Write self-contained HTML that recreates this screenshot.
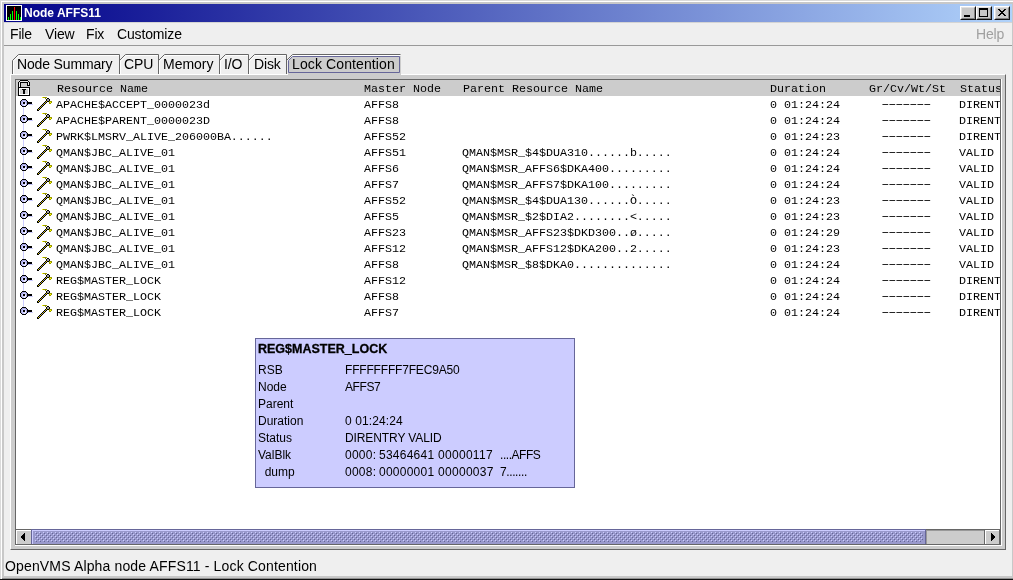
<!DOCTYPE html>
<html>
<head>
<meta charset="utf-8">
<title>Node AFFS11</title>
<style>
html,body{margin:0;padding:0;}
body{width:1013px;height:580px;overflow:hidden;background:#c8c8c8;position:relative;font-family:"Liberation Sans",Arial,sans-serif;color:#000;}
.abs{position:absolute;}
#frame{left:0;top:0;width:1013px;height:580px;background:#c8c8c8;}
#f1{left:0;top:0;width:1013px;height:1px;background:#dadada;}
#f2{left:0;top:0;width:1px;height:580px;background:#dadada;}
#f3{left:1px;top:1px;width:1012px;height:1px;background:#fff;}
#f4{left:1px;top:1px;width:1px;height:578px;background:#fff;}
#f5{left:0;top:579px;width:1013px;height:1px;background:#101010;}
#f6{left:2px;top:578px;width:1011px;height:1px;background:#909090;}
#title{left:4px;top:4px;width:1008px;height:18px;background:linear-gradient(to right,#02028a 0%,#b0d2fa 100%);}
#ttext{left:24.3px;top:4px;height:18px;line-height:18px;font-size:12px;font-weight:bold;color:#fff;white-space:nowrap;}
#client{left:4px;top:23px;width:1008px;height:553px;background:#efefef;}
#redge{left:4px;top:22px;width:1008px;height:1px;background:#d4d4d4;}
.menu{top:23.5px;height:20px;line-height:20px;font-size:14px;letter-spacing:-0.15px;white-space:nowrap;}
#msep{left:4px;top:45px;width:1008px;height:1px;background:#999;}
.tabtxt{top:55.3px;height:19px;line-height:19px;font-size:14px;letter-spacing:-0.15px;white-space:nowrap;}
#panel{left:10px;top:74px;width:996px;height:476px;background:#ccc;box-sizing:border-box;border-top:1px solid #fff;border-left:1px solid #fff;border-right:1px solid #666;border-bottom:1px solid #666;}
#spane{left:15px;top:79px;width:987px;height:467px;box-sizing:border-box;border:1px solid #666;border-right-color:#fff;border-bottom-color:#fff;background:#fff;}
#spane2{left:15px;top:79px;width:986px;height:466px;box-sizing:border-box;border:1px solid #666;background:#fff;}
#spw{left:1001px;top:79px;width:1px;height:467px;background:#fff;}
#spb{left:15px;top:545px;width:987px;height:1px;background:#fff;}
#thead{left:16px;top:80px;width:984px;height:16px;background:#ccc;}
#pane{left:0;top:0;width:1000px;height:529px;overflow:hidden;}
#status{left:5px;top:556px;height:20px;line-height:20px;font-size:14px;letter-spacing:0.15px;white-space:nowrap;}
.mono{font-family:"Liberation Mono","Courier New",monospace;font-size:11.67px;white-space:pre;line-height:16px;height:16px;}
#tip{left:255px;top:338px;width:320px;height:150px;box-sizing:border-box;border:1px solid #666699;background:#ccccff;}
#tiptitle{left:258px;top:340px;height:18px;line-height:18px;font-size:12.5px;font-weight:bold;white-space:nowrap;-webkit-text-stroke:0.3px #000;}
.tl{left:258px;height:17px;line-height:17px;font-size:12px;white-space:pre;}
.tv{left:345px;height:17px;line-height:17px;font-size:12px;white-space:pre;}
#sbar{left:16px;top:529px;width:984px;height:16px;background:#ccc;box-sizing:border-box;border-top:1px solid #666;}
.cbtn{top:6px;width:16px;height:14px;box-sizing:border-box;background:#c8c8c8;border:1px solid;border-color:#fff #101010 #101010 #fff;}
.cbtn i{position:absolute;left:0;top:0;width:12px;height:10px;border:1px solid;border-color:#e0e0e0 #808080 #808080 #e0e0e0;box-sizing:content-box;display:block;}
body>*{will-change:transform;}
</style>
</head>
<body>
<div id="frame" class="abs"></div>
<div id="f1" class="abs"></div><div id="f2" class="abs"></div><div id="f3" class="abs"></div><div id="f4" class="abs"></div>
<div id="f6" class="abs"></div><div id="f5" class="abs"></div>
<div id="title" class="abs"></div>
<svg class="abs" style="left:6px;top:5px" width="16" height="16" viewBox="0 0 16 16" shape-rendering="crispEdges">
<rect x="0" y="0" width="16" height="16" fill="#fff"/>
<rect x="1" y="1" width="14" height="14" fill="#000"/>
<rect x="2" y="12" width="1" height="3" fill="#0f0"/>
<rect x="4" y="9" width="1" height="6" fill="#0f0"/>
<rect x="6" y="6" width="1" height="9" fill="#0f0"/>
<rect x="8" y="2" width="1" height="13" fill="#f00"/>
<rect x="10" y="6" width="1" height="9" fill="#0f0"/>
<rect x="12" y="9" width="1" height="6" fill="#0f0"/>
<rect x="14" y="12" width="1" height="3" fill="#0f0"/>
</svg>
<div id="ttext" class="abs">Node AFFS11</div>
<div class="abs cbtn" style="left:960px"><i></i></div>
<div class="abs cbtn" style="left:976px"><i></i></div>
<div class="abs cbtn" style="left:994px"><i></i></div>
<svg class="abs" style="left:960px;top:6px" width="50" height="14" viewBox="0 0 50 14" shape-rendering="crispEdges">
<rect x="4" y="9" width="6" height="2" fill="#000"/>
<rect x="19" y="2" width="9" height="9" fill="#000"/><rect x="20" y="4" width="7" height="6" fill="#c8c8c8"/>
<path d="M38 3h2v1h1v1h2v-1h1v-1h2v1h-1v1h-1v1h-1v1h1v1h1v1h1v1h-2v-1h-1v-1h-2v1h-1v1h-2v-1h1v-1h1v-1h1v-1h-1v-1h-1v-1h-1z" fill="#000"/>
</svg>
<div id="client" class="abs"></div>
<div id="redge" class="abs"></div>
<div class="abs menu" style="left:10px">File</div>
<div class="abs menu" style="left:45px">View</div>
<div class="abs menu" style="left:86px">Fix</div>
<div class="abs menu" style="left:117px">Customize</div>
<div class="abs menu" style="left:976px;color:#a0a0a0">Help</div>
<div id="msep" class="abs"></div>
<div id="panel" class="abs"></div>
<svg class="abs" style="left:0;top:50px" width="420" height="26" viewBox="0 50 420 26">
<g fill="none" stroke="#fff" stroke-width="1">
<path d="M13.5 74V61L19 55.5H119"/>
<path d="M120.5 74V61L126 55.5H158"/>
<path d="M159.5 74V61L165 55.5H219"/>
<path d="M220.5 74V61L226 55.5H248"/>
<path d="M249.5 74V61L255 55.5H286"/>
</g>
<g fill="none" stroke="#666" stroke-width="1">
<path d="M12.5 74V60.5L18.5 54.5H119.5V74"/>
<path d="M119.5 60.5L125.5 54.5H158.5V74"/>
<path d="M158.5 60.5L164.5 54.5H219.5V74"/>
<path d="M219.5 60.5L225.5 54.5H248.5V74"/>
<path d="M248.5 60.5L254.5 54.5H286.5V74"/>
</g>
<path d="M288 75V61L293 56H401V75Z" fill="#ccc"/>
<path d="M287.5 61L293 55.5H400" fill="none" stroke="#fff"/>
<path d="M286.5 60.5L292.5 54.5H400.5" fill="none" stroke="#666"/>
<path d="M288.5 72.5V60.5L292.5 56.5H399.5V72.5Z" fill="none" stroke="#666699"/>
</svg>
<div class="abs tabtxt" style="left:17px">Node Summary</div>
<div class="abs tabtxt" style="left:124px">CPU</div>
<div class="abs tabtxt" style="left:163.4px;letter-spacing:-0.03px">Memory</div>
<div class="abs tabtxt" style="left:224px">I/O</div>
<div class="abs tabtxt" style="left:254.2px">Disk</div>
<div class="abs tabtxt" style="left:292px;letter-spacing:0.11px">Lock Contention</div>
<div id="spane2" class="abs"></div><div id="spw" class="abs"></div><div id="spb" class="abs"></div>
<div id="thead" class="abs"></div>

<div id="pane" class="abs">
<div class="abs" id="treeline" style="left:23px;top:107px;width:1px;height:200px;background:#ccccff"></div>
<div class="abs mono" style="left:57px;top:81px">Resource Name</div>
<div class="abs mono" style="left:364px;top:81px">Master Node</div>
<div class="abs mono" style="left:463px;top:81px">Parent Resource Name</div>
<div class="abs mono" style="left:770px;top:81px">Duration</div>
<div class="abs mono" style="left:869px;top:81px">Gr/Cv/Wt/St</div>
<div class="abs mono" style="left:960px;top:81px">Status</div>
<svg class="abs" style="left:18px;top:96px" width="36" height="16" viewBox="0 0 36 16"><g shape-rendering="crispEdges"><rect x="10" y="8" width="5" height="1" fill="#ccccff"/><path d="M4 3h4v1h1v1h1v4h-1v1h-1v1h-4v-1h-1v-1h-1v-4h1v-1h1z" fill="#000"/><path d="M4 4h4v1h1v4h-1v1h-4v-1h-1v-4h1z" fill="#a8a8e4"/><path d="M5 5h3v4h-1v1h-2v-1h-1v-3h1z" fill="#ccccff"/><path d="M7 7h1v2h-1v1h-1v-1h1z" fill="#fff"/><rect x="5" y="6" width="2" height="2" fill="#000"/><rect x="10" y="6" width="4" height="2" fill="#000"/><rect x="19" y="13" width="1" height="1" fill="#000"/><rect x="20" y="14" width="1" height="1" fill="#000"/><rect x="20" y="12" width="1" height="1" fill="#000"/><rect x="21" y="13" width="1" height="1" fill="#000"/><rect x="21" y="11" width="1" height="1" fill="#000"/><rect x="22" y="12" width="1" height="1" fill="#000"/><rect x="22" y="10" width="1" height="1" fill="#000"/><rect x="23" y="11" width="1" height="1" fill="#000"/><rect x="23" y="9" width="1" height="1" fill="#000"/><rect x="24" y="10" width="1" height="1" fill="#000"/><rect x="24" y="8" width="1" height="1" fill="#000"/><rect x="25" y="9" width="1" height="1" fill="#000"/><rect x="25" y="7" width="1" height="1" fill="#000"/><rect x="26" y="8" width="1" height="1" fill="#000"/><rect x="26" y="6" width="1" height="1" fill="#000"/><rect x="27" y="7" width="1" height="1" fill="#000"/><rect x="27" y="5" width="1" height="1" fill="#000"/><rect x="28" y="6" width="1" height="1" fill="#000"/><rect x="19" y="14" width="1" height="1" fill="#000"/><rect x="20" y="13" width="1" height="1" fill="#d8c800"/><rect x="22" y="11" width="1" height="1" fill="#d8c800"/><rect x="24" y="9" width="1" height="1" fill="#d8c800"/><rect x="26" y="7" width="1" height="1" fill="#d8c800"/><rect x="28" y="5" width="1" height="1" fill="#d8c800"/><rect x="21" y="12" width="1" height="1" fill="#909090"/><rect x="23" y="10" width="1" height="1" fill="#909090"/><rect x="25" y="8" width="1" height="1" fill="#909090"/><rect x="27" y="6" width="1" height="1" fill="#909090"/><path d="M29 2h2v1h1v2h-1v1h-2v-1h-1v-2h1z" fill="#000"/><rect x="29" y="3" width="2" height="2" fill="#a0a0a0"/><rect x="24" y="1" width="1" height="1" fill="#ffff00"/><rect x="25" y="1" width="4" height="1" fill="#999900"/><rect x="27" y="2" width="1" height="1" fill="#808000"/><rect x="31" y="5" width="3" height="1" fill="#999900"/><rect x="31" y="6" width="3" height="1" fill="#999900"/><rect x="32" y="6" width="1" height="1" fill="#ffff00"/><rect x="31" y="7" width="2" height="1" fill="#999900"/></g></svg>
<div class="abs mono" style="left:56px;top:97px">APACHE$ACCEPT_0000023d</div>
<div class="abs mono" style="left:364px;top:97px">AFFS8</div>
<div class="abs mono" style="left:770px;top:97px">0 01:24:24</div>
<div class="abs mono" style="left:879.4px;top:96px;letter-spacing:-3.111px;transform:scaleX(1.8);transform-origin:0 0">-------</div>
<div class="abs mono" style="left:959px;top:97px">DIRENTRY VALID</div>
<svg class="abs" style="left:18px;top:112px" width="36" height="16" viewBox="0 0 36 16"><g shape-rendering="crispEdges"><rect x="10" y="8" width="5" height="1" fill="#ccccff"/><path d="M4 3h4v1h1v1h1v4h-1v1h-1v1h-4v-1h-1v-1h-1v-4h1v-1h1z" fill="#000"/><path d="M4 4h4v1h1v4h-1v1h-4v-1h-1v-4h1z" fill="#a8a8e4"/><path d="M5 5h3v4h-1v1h-2v-1h-1v-3h1z" fill="#ccccff"/><path d="M7 7h1v2h-1v1h-1v-1h1z" fill="#fff"/><rect x="5" y="6" width="2" height="2" fill="#000"/><rect x="10" y="6" width="4" height="2" fill="#000"/><rect x="19" y="13" width="1" height="1" fill="#000"/><rect x="20" y="14" width="1" height="1" fill="#000"/><rect x="20" y="12" width="1" height="1" fill="#000"/><rect x="21" y="13" width="1" height="1" fill="#000"/><rect x="21" y="11" width="1" height="1" fill="#000"/><rect x="22" y="12" width="1" height="1" fill="#000"/><rect x="22" y="10" width="1" height="1" fill="#000"/><rect x="23" y="11" width="1" height="1" fill="#000"/><rect x="23" y="9" width="1" height="1" fill="#000"/><rect x="24" y="10" width="1" height="1" fill="#000"/><rect x="24" y="8" width="1" height="1" fill="#000"/><rect x="25" y="9" width="1" height="1" fill="#000"/><rect x="25" y="7" width="1" height="1" fill="#000"/><rect x="26" y="8" width="1" height="1" fill="#000"/><rect x="26" y="6" width="1" height="1" fill="#000"/><rect x="27" y="7" width="1" height="1" fill="#000"/><rect x="27" y="5" width="1" height="1" fill="#000"/><rect x="28" y="6" width="1" height="1" fill="#000"/><rect x="19" y="14" width="1" height="1" fill="#000"/><rect x="20" y="13" width="1" height="1" fill="#d8c800"/><rect x="22" y="11" width="1" height="1" fill="#d8c800"/><rect x="24" y="9" width="1" height="1" fill="#d8c800"/><rect x="26" y="7" width="1" height="1" fill="#d8c800"/><rect x="28" y="5" width="1" height="1" fill="#d8c800"/><rect x="21" y="12" width="1" height="1" fill="#909090"/><rect x="23" y="10" width="1" height="1" fill="#909090"/><rect x="25" y="8" width="1" height="1" fill="#909090"/><rect x="27" y="6" width="1" height="1" fill="#909090"/><path d="M29 2h2v1h1v2h-1v1h-2v-1h-1v-2h1z" fill="#000"/><rect x="29" y="3" width="2" height="2" fill="#a0a0a0"/><rect x="24" y="1" width="1" height="1" fill="#ffff00"/><rect x="25" y="1" width="4" height="1" fill="#999900"/><rect x="27" y="2" width="1" height="1" fill="#808000"/><rect x="31" y="5" width="3" height="1" fill="#999900"/><rect x="31" y="6" width="3" height="1" fill="#999900"/><rect x="32" y="6" width="1" height="1" fill="#ffff00"/><rect x="31" y="7" width="2" height="1" fill="#999900"/></g></svg>
<div class="abs mono" style="left:56px;top:113px">APACHE$PARENT_0000023D</div>
<div class="abs mono" style="left:364px;top:113px">AFFS8</div>
<div class="abs mono" style="left:770px;top:113px">0 01:24:24</div>
<div class="abs mono" style="left:879.4px;top:112px;letter-spacing:-3.111px;transform:scaleX(1.8);transform-origin:0 0">-------</div>
<div class="abs mono" style="left:959px;top:113px">DIRENTRY VALID</div>
<svg class="abs" style="left:18px;top:128px" width="36" height="16" viewBox="0 0 36 16"><g shape-rendering="crispEdges"><rect x="10" y="8" width="5" height="1" fill="#ccccff"/><path d="M4 3h4v1h1v1h1v4h-1v1h-1v1h-4v-1h-1v-1h-1v-4h1v-1h1z" fill="#000"/><path d="M4 4h4v1h1v4h-1v1h-4v-1h-1v-4h1z" fill="#a8a8e4"/><path d="M5 5h3v4h-1v1h-2v-1h-1v-3h1z" fill="#ccccff"/><path d="M7 7h1v2h-1v1h-1v-1h1z" fill="#fff"/><rect x="5" y="6" width="2" height="2" fill="#000"/><rect x="10" y="6" width="4" height="2" fill="#000"/><rect x="19" y="13" width="1" height="1" fill="#000"/><rect x="20" y="14" width="1" height="1" fill="#000"/><rect x="20" y="12" width="1" height="1" fill="#000"/><rect x="21" y="13" width="1" height="1" fill="#000"/><rect x="21" y="11" width="1" height="1" fill="#000"/><rect x="22" y="12" width="1" height="1" fill="#000"/><rect x="22" y="10" width="1" height="1" fill="#000"/><rect x="23" y="11" width="1" height="1" fill="#000"/><rect x="23" y="9" width="1" height="1" fill="#000"/><rect x="24" y="10" width="1" height="1" fill="#000"/><rect x="24" y="8" width="1" height="1" fill="#000"/><rect x="25" y="9" width="1" height="1" fill="#000"/><rect x="25" y="7" width="1" height="1" fill="#000"/><rect x="26" y="8" width="1" height="1" fill="#000"/><rect x="26" y="6" width="1" height="1" fill="#000"/><rect x="27" y="7" width="1" height="1" fill="#000"/><rect x="27" y="5" width="1" height="1" fill="#000"/><rect x="28" y="6" width="1" height="1" fill="#000"/><rect x="19" y="14" width="1" height="1" fill="#000"/><rect x="20" y="13" width="1" height="1" fill="#d8c800"/><rect x="22" y="11" width="1" height="1" fill="#d8c800"/><rect x="24" y="9" width="1" height="1" fill="#d8c800"/><rect x="26" y="7" width="1" height="1" fill="#d8c800"/><rect x="28" y="5" width="1" height="1" fill="#d8c800"/><rect x="21" y="12" width="1" height="1" fill="#909090"/><rect x="23" y="10" width="1" height="1" fill="#909090"/><rect x="25" y="8" width="1" height="1" fill="#909090"/><rect x="27" y="6" width="1" height="1" fill="#909090"/><path d="M29 2h2v1h1v2h-1v1h-2v-1h-1v-2h1z" fill="#000"/><rect x="29" y="3" width="2" height="2" fill="#a0a0a0"/><rect x="24" y="1" width="1" height="1" fill="#ffff00"/><rect x="25" y="1" width="4" height="1" fill="#999900"/><rect x="27" y="2" width="1" height="1" fill="#808000"/><rect x="31" y="5" width="3" height="1" fill="#999900"/><rect x="31" y="6" width="3" height="1" fill="#999900"/><rect x="32" y="6" width="1" height="1" fill="#ffff00"/><rect x="31" y="7" width="2" height="1" fill="#999900"/></g></svg>
<div class="abs mono" style="left:56px;top:129px">PWRK$LMSRV_ALIVE_206000BA......</div>
<div class="abs mono" style="left:364px;top:129px">AFFS52</div>
<div class="abs mono" style="left:770px;top:129px">0 01:24:23</div>
<div class="abs mono" style="left:879.4px;top:128px;letter-spacing:-3.111px;transform:scaleX(1.8);transform-origin:0 0">-------</div>
<div class="abs mono" style="left:959px;top:129px">DIRENTRY VALID</div>
<svg class="abs" style="left:18px;top:144px" width="36" height="16" viewBox="0 0 36 16"><g shape-rendering="crispEdges"><rect x="10" y="8" width="5" height="1" fill="#ccccff"/><path d="M4 3h4v1h1v1h1v4h-1v1h-1v1h-4v-1h-1v-1h-1v-4h1v-1h1z" fill="#000"/><path d="M4 4h4v1h1v4h-1v1h-4v-1h-1v-4h1z" fill="#a8a8e4"/><path d="M5 5h3v4h-1v1h-2v-1h-1v-3h1z" fill="#ccccff"/><path d="M7 7h1v2h-1v1h-1v-1h1z" fill="#fff"/><rect x="5" y="6" width="2" height="2" fill="#000"/><rect x="10" y="6" width="4" height="2" fill="#000"/><rect x="19" y="13" width="1" height="1" fill="#000"/><rect x="20" y="14" width="1" height="1" fill="#000"/><rect x="20" y="12" width="1" height="1" fill="#000"/><rect x="21" y="13" width="1" height="1" fill="#000"/><rect x="21" y="11" width="1" height="1" fill="#000"/><rect x="22" y="12" width="1" height="1" fill="#000"/><rect x="22" y="10" width="1" height="1" fill="#000"/><rect x="23" y="11" width="1" height="1" fill="#000"/><rect x="23" y="9" width="1" height="1" fill="#000"/><rect x="24" y="10" width="1" height="1" fill="#000"/><rect x="24" y="8" width="1" height="1" fill="#000"/><rect x="25" y="9" width="1" height="1" fill="#000"/><rect x="25" y="7" width="1" height="1" fill="#000"/><rect x="26" y="8" width="1" height="1" fill="#000"/><rect x="26" y="6" width="1" height="1" fill="#000"/><rect x="27" y="7" width="1" height="1" fill="#000"/><rect x="27" y="5" width="1" height="1" fill="#000"/><rect x="28" y="6" width="1" height="1" fill="#000"/><rect x="19" y="14" width="1" height="1" fill="#000"/><rect x="20" y="13" width="1" height="1" fill="#d8c800"/><rect x="22" y="11" width="1" height="1" fill="#d8c800"/><rect x="24" y="9" width="1" height="1" fill="#d8c800"/><rect x="26" y="7" width="1" height="1" fill="#d8c800"/><rect x="28" y="5" width="1" height="1" fill="#d8c800"/><rect x="21" y="12" width="1" height="1" fill="#909090"/><rect x="23" y="10" width="1" height="1" fill="#909090"/><rect x="25" y="8" width="1" height="1" fill="#909090"/><rect x="27" y="6" width="1" height="1" fill="#909090"/><path d="M29 2h2v1h1v2h-1v1h-2v-1h-1v-2h1z" fill="#000"/><rect x="29" y="3" width="2" height="2" fill="#a0a0a0"/><rect x="24" y="1" width="1" height="1" fill="#ffff00"/><rect x="25" y="1" width="4" height="1" fill="#999900"/><rect x="27" y="2" width="1" height="1" fill="#808000"/><rect x="31" y="5" width="3" height="1" fill="#999900"/><rect x="31" y="6" width="3" height="1" fill="#999900"/><rect x="32" y="6" width="1" height="1" fill="#ffff00"/><rect x="31" y="7" width="2" height="1" fill="#999900"/></g></svg>
<div class="abs mono" style="left:56px;top:145px">QMAN$JBC_ALIVE_01</div>
<div class="abs mono" style="left:364px;top:145px">AFFS51</div>
<div class="abs mono" style="left:462px;top:145px">QMAN$MSR_$4$DUA310......b.....</div>
<div class="abs mono" style="left:770px;top:145px">0 01:24:24</div>
<div class="abs mono" style="left:879.4px;top:144px;letter-spacing:-3.111px;transform:scaleX(1.8);transform-origin:0 0">-------</div>
<div class="abs mono" style="left:959px;top:145px">VALID</div>
<svg class="abs" style="left:18px;top:160px" width="36" height="16" viewBox="0 0 36 16"><g shape-rendering="crispEdges"><rect x="10" y="8" width="5" height="1" fill="#ccccff"/><path d="M4 3h4v1h1v1h1v4h-1v1h-1v1h-4v-1h-1v-1h-1v-4h1v-1h1z" fill="#000"/><path d="M4 4h4v1h1v4h-1v1h-4v-1h-1v-4h1z" fill="#a8a8e4"/><path d="M5 5h3v4h-1v1h-2v-1h-1v-3h1z" fill="#ccccff"/><path d="M7 7h1v2h-1v1h-1v-1h1z" fill="#fff"/><rect x="5" y="6" width="2" height="2" fill="#000"/><rect x="10" y="6" width="4" height="2" fill="#000"/><rect x="19" y="13" width="1" height="1" fill="#000"/><rect x="20" y="14" width="1" height="1" fill="#000"/><rect x="20" y="12" width="1" height="1" fill="#000"/><rect x="21" y="13" width="1" height="1" fill="#000"/><rect x="21" y="11" width="1" height="1" fill="#000"/><rect x="22" y="12" width="1" height="1" fill="#000"/><rect x="22" y="10" width="1" height="1" fill="#000"/><rect x="23" y="11" width="1" height="1" fill="#000"/><rect x="23" y="9" width="1" height="1" fill="#000"/><rect x="24" y="10" width="1" height="1" fill="#000"/><rect x="24" y="8" width="1" height="1" fill="#000"/><rect x="25" y="9" width="1" height="1" fill="#000"/><rect x="25" y="7" width="1" height="1" fill="#000"/><rect x="26" y="8" width="1" height="1" fill="#000"/><rect x="26" y="6" width="1" height="1" fill="#000"/><rect x="27" y="7" width="1" height="1" fill="#000"/><rect x="27" y="5" width="1" height="1" fill="#000"/><rect x="28" y="6" width="1" height="1" fill="#000"/><rect x="19" y="14" width="1" height="1" fill="#000"/><rect x="20" y="13" width="1" height="1" fill="#d8c800"/><rect x="22" y="11" width="1" height="1" fill="#d8c800"/><rect x="24" y="9" width="1" height="1" fill="#d8c800"/><rect x="26" y="7" width="1" height="1" fill="#d8c800"/><rect x="28" y="5" width="1" height="1" fill="#d8c800"/><rect x="21" y="12" width="1" height="1" fill="#909090"/><rect x="23" y="10" width="1" height="1" fill="#909090"/><rect x="25" y="8" width="1" height="1" fill="#909090"/><rect x="27" y="6" width="1" height="1" fill="#909090"/><path d="M29 2h2v1h1v2h-1v1h-2v-1h-1v-2h1z" fill="#000"/><rect x="29" y="3" width="2" height="2" fill="#a0a0a0"/><rect x="24" y="1" width="1" height="1" fill="#ffff00"/><rect x="25" y="1" width="4" height="1" fill="#999900"/><rect x="27" y="2" width="1" height="1" fill="#808000"/><rect x="31" y="5" width="3" height="1" fill="#999900"/><rect x="31" y="6" width="3" height="1" fill="#999900"/><rect x="32" y="6" width="1" height="1" fill="#ffff00"/><rect x="31" y="7" width="2" height="1" fill="#999900"/></g></svg>
<div class="abs mono" style="left:56px;top:161px">QMAN$JBC_ALIVE_01</div>
<div class="abs mono" style="left:364px;top:161px">AFFS6</div>
<div class="abs mono" style="left:462px;top:161px">QMAN$MSR_AFFS6$DKA400.........</div>
<div class="abs mono" style="left:770px;top:161px">0 01:24:24</div>
<div class="abs mono" style="left:879.4px;top:160px;letter-spacing:-3.111px;transform:scaleX(1.8);transform-origin:0 0">-------</div>
<div class="abs mono" style="left:959px;top:161px">VALID</div>
<svg class="abs" style="left:18px;top:176px" width="36" height="16" viewBox="0 0 36 16"><g shape-rendering="crispEdges"><rect x="10" y="8" width="5" height="1" fill="#ccccff"/><path d="M4 3h4v1h1v1h1v4h-1v1h-1v1h-4v-1h-1v-1h-1v-4h1v-1h1z" fill="#000"/><path d="M4 4h4v1h1v4h-1v1h-4v-1h-1v-4h1z" fill="#a8a8e4"/><path d="M5 5h3v4h-1v1h-2v-1h-1v-3h1z" fill="#ccccff"/><path d="M7 7h1v2h-1v1h-1v-1h1z" fill="#fff"/><rect x="5" y="6" width="2" height="2" fill="#000"/><rect x="10" y="6" width="4" height="2" fill="#000"/><rect x="19" y="13" width="1" height="1" fill="#000"/><rect x="20" y="14" width="1" height="1" fill="#000"/><rect x="20" y="12" width="1" height="1" fill="#000"/><rect x="21" y="13" width="1" height="1" fill="#000"/><rect x="21" y="11" width="1" height="1" fill="#000"/><rect x="22" y="12" width="1" height="1" fill="#000"/><rect x="22" y="10" width="1" height="1" fill="#000"/><rect x="23" y="11" width="1" height="1" fill="#000"/><rect x="23" y="9" width="1" height="1" fill="#000"/><rect x="24" y="10" width="1" height="1" fill="#000"/><rect x="24" y="8" width="1" height="1" fill="#000"/><rect x="25" y="9" width="1" height="1" fill="#000"/><rect x="25" y="7" width="1" height="1" fill="#000"/><rect x="26" y="8" width="1" height="1" fill="#000"/><rect x="26" y="6" width="1" height="1" fill="#000"/><rect x="27" y="7" width="1" height="1" fill="#000"/><rect x="27" y="5" width="1" height="1" fill="#000"/><rect x="28" y="6" width="1" height="1" fill="#000"/><rect x="19" y="14" width="1" height="1" fill="#000"/><rect x="20" y="13" width="1" height="1" fill="#d8c800"/><rect x="22" y="11" width="1" height="1" fill="#d8c800"/><rect x="24" y="9" width="1" height="1" fill="#d8c800"/><rect x="26" y="7" width="1" height="1" fill="#d8c800"/><rect x="28" y="5" width="1" height="1" fill="#d8c800"/><rect x="21" y="12" width="1" height="1" fill="#909090"/><rect x="23" y="10" width="1" height="1" fill="#909090"/><rect x="25" y="8" width="1" height="1" fill="#909090"/><rect x="27" y="6" width="1" height="1" fill="#909090"/><path d="M29 2h2v1h1v2h-1v1h-2v-1h-1v-2h1z" fill="#000"/><rect x="29" y="3" width="2" height="2" fill="#a0a0a0"/><rect x="24" y="1" width="1" height="1" fill="#ffff00"/><rect x="25" y="1" width="4" height="1" fill="#999900"/><rect x="27" y="2" width="1" height="1" fill="#808000"/><rect x="31" y="5" width="3" height="1" fill="#999900"/><rect x="31" y="6" width="3" height="1" fill="#999900"/><rect x="32" y="6" width="1" height="1" fill="#ffff00"/><rect x="31" y="7" width="2" height="1" fill="#999900"/></g></svg>
<div class="abs mono" style="left:56px;top:177px">QMAN$JBC_ALIVE_01</div>
<div class="abs mono" style="left:364px;top:177px">AFFS7</div>
<div class="abs mono" style="left:462px;top:177px">QMAN$MSR_AFFS7$DKA100.........</div>
<div class="abs mono" style="left:770px;top:177px">0 01:24:24</div>
<div class="abs mono" style="left:879.4px;top:176px;letter-spacing:-3.111px;transform:scaleX(1.8);transform-origin:0 0">-------</div>
<div class="abs mono" style="left:959px;top:177px">VALID</div>
<svg class="abs" style="left:18px;top:192px" width="36" height="16" viewBox="0 0 36 16"><g shape-rendering="crispEdges"><rect x="10" y="8" width="5" height="1" fill="#ccccff"/><path d="M4 3h4v1h1v1h1v4h-1v1h-1v1h-4v-1h-1v-1h-1v-4h1v-1h1z" fill="#000"/><path d="M4 4h4v1h1v4h-1v1h-4v-1h-1v-4h1z" fill="#a8a8e4"/><path d="M5 5h3v4h-1v1h-2v-1h-1v-3h1z" fill="#ccccff"/><path d="M7 7h1v2h-1v1h-1v-1h1z" fill="#fff"/><rect x="5" y="6" width="2" height="2" fill="#000"/><rect x="10" y="6" width="4" height="2" fill="#000"/><rect x="19" y="13" width="1" height="1" fill="#000"/><rect x="20" y="14" width="1" height="1" fill="#000"/><rect x="20" y="12" width="1" height="1" fill="#000"/><rect x="21" y="13" width="1" height="1" fill="#000"/><rect x="21" y="11" width="1" height="1" fill="#000"/><rect x="22" y="12" width="1" height="1" fill="#000"/><rect x="22" y="10" width="1" height="1" fill="#000"/><rect x="23" y="11" width="1" height="1" fill="#000"/><rect x="23" y="9" width="1" height="1" fill="#000"/><rect x="24" y="10" width="1" height="1" fill="#000"/><rect x="24" y="8" width="1" height="1" fill="#000"/><rect x="25" y="9" width="1" height="1" fill="#000"/><rect x="25" y="7" width="1" height="1" fill="#000"/><rect x="26" y="8" width="1" height="1" fill="#000"/><rect x="26" y="6" width="1" height="1" fill="#000"/><rect x="27" y="7" width="1" height="1" fill="#000"/><rect x="27" y="5" width="1" height="1" fill="#000"/><rect x="28" y="6" width="1" height="1" fill="#000"/><rect x="19" y="14" width="1" height="1" fill="#000"/><rect x="20" y="13" width="1" height="1" fill="#d8c800"/><rect x="22" y="11" width="1" height="1" fill="#d8c800"/><rect x="24" y="9" width="1" height="1" fill="#d8c800"/><rect x="26" y="7" width="1" height="1" fill="#d8c800"/><rect x="28" y="5" width="1" height="1" fill="#d8c800"/><rect x="21" y="12" width="1" height="1" fill="#909090"/><rect x="23" y="10" width="1" height="1" fill="#909090"/><rect x="25" y="8" width="1" height="1" fill="#909090"/><rect x="27" y="6" width="1" height="1" fill="#909090"/><path d="M29 2h2v1h1v2h-1v1h-2v-1h-1v-2h1z" fill="#000"/><rect x="29" y="3" width="2" height="2" fill="#a0a0a0"/><rect x="24" y="1" width="1" height="1" fill="#ffff00"/><rect x="25" y="1" width="4" height="1" fill="#999900"/><rect x="27" y="2" width="1" height="1" fill="#808000"/><rect x="31" y="5" width="3" height="1" fill="#999900"/><rect x="31" y="6" width="3" height="1" fill="#999900"/><rect x="32" y="6" width="1" height="1" fill="#ffff00"/><rect x="31" y="7" width="2" height="1" fill="#999900"/></g></svg>
<div class="abs mono" style="left:56px;top:193px">QMAN$JBC_ALIVE_01</div>
<div class="abs mono" style="left:364px;top:193px">AFFS52</div>
<div class="abs mono" style="left:462px;top:193px">QMAN$MSR_$4$DUA130......Ò.....</div>
<div class="abs mono" style="left:770px;top:193px">0 01:24:23</div>
<div class="abs mono" style="left:879.4px;top:192px;letter-spacing:-3.111px;transform:scaleX(1.8);transform-origin:0 0">-------</div>
<div class="abs mono" style="left:959px;top:193px">VALID</div>
<svg class="abs" style="left:18px;top:208px" width="36" height="16" viewBox="0 0 36 16"><g shape-rendering="crispEdges"><rect x="10" y="8" width="5" height="1" fill="#ccccff"/><path d="M4 3h4v1h1v1h1v4h-1v1h-1v1h-4v-1h-1v-1h-1v-4h1v-1h1z" fill="#000"/><path d="M4 4h4v1h1v4h-1v1h-4v-1h-1v-4h1z" fill="#a8a8e4"/><path d="M5 5h3v4h-1v1h-2v-1h-1v-3h1z" fill="#ccccff"/><path d="M7 7h1v2h-1v1h-1v-1h1z" fill="#fff"/><rect x="5" y="6" width="2" height="2" fill="#000"/><rect x="10" y="6" width="4" height="2" fill="#000"/><rect x="19" y="13" width="1" height="1" fill="#000"/><rect x="20" y="14" width="1" height="1" fill="#000"/><rect x="20" y="12" width="1" height="1" fill="#000"/><rect x="21" y="13" width="1" height="1" fill="#000"/><rect x="21" y="11" width="1" height="1" fill="#000"/><rect x="22" y="12" width="1" height="1" fill="#000"/><rect x="22" y="10" width="1" height="1" fill="#000"/><rect x="23" y="11" width="1" height="1" fill="#000"/><rect x="23" y="9" width="1" height="1" fill="#000"/><rect x="24" y="10" width="1" height="1" fill="#000"/><rect x="24" y="8" width="1" height="1" fill="#000"/><rect x="25" y="9" width="1" height="1" fill="#000"/><rect x="25" y="7" width="1" height="1" fill="#000"/><rect x="26" y="8" width="1" height="1" fill="#000"/><rect x="26" y="6" width="1" height="1" fill="#000"/><rect x="27" y="7" width="1" height="1" fill="#000"/><rect x="27" y="5" width="1" height="1" fill="#000"/><rect x="28" y="6" width="1" height="1" fill="#000"/><rect x="19" y="14" width="1" height="1" fill="#000"/><rect x="20" y="13" width="1" height="1" fill="#d8c800"/><rect x="22" y="11" width="1" height="1" fill="#d8c800"/><rect x="24" y="9" width="1" height="1" fill="#d8c800"/><rect x="26" y="7" width="1" height="1" fill="#d8c800"/><rect x="28" y="5" width="1" height="1" fill="#d8c800"/><rect x="21" y="12" width="1" height="1" fill="#909090"/><rect x="23" y="10" width="1" height="1" fill="#909090"/><rect x="25" y="8" width="1" height="1" fill="#909090"/><rect x="27" y="6" width="1" height="1" fill="#909090"/><path d="M29 2h2v1h1v2h-1v1h-2v-1h-1v-2h1z" fill="#000"/><rect x="29" y="3" width="2" height="2" fill="#a0a0a0"/><rect x="24" y="1" width="1" height="1" fill="#ffff00"/><rect x="25" y="1" width="4" height="1" fill="#999900"/><rect x="27" y="2" width="1" height="1" fill="#808000"/><rect x="31" y="5" width="3" height="1" fill="#999900"/><rect x="31" y="6" width="3" height="1" fill="#999900"/><rect x="32" y="6" width="1" height="1" fill="#ffff00"/><rect x="31" y="7" width="2" height="1" fill="#999900"/></g></svg>
<div class="abs mono" style="left:56px;top:209px">QMAN$JBC_ALIVE_01</div>
<div class="abs mono" style="left:364px;top:209px">AFFS5</div>
<div class="abs mono" style="left:462px;top:209px">QMAN$MSR_$2$DIA2........&lt;.....</div>
<div class="abs mono" style="left:770px;top:209px">0 01:24:23</div>
<div class="abs mono" style="left:879.4px;top:208px;letter-spacing:-3.111px;transform:scaleX(1.8);transform-origin:0 0">-------</div>
<div class="abs mono" style="left:959px;top:209px">VALID</div>
<svg class="abs" style="left:18px;top:224px" width="36" height="16" viewBox="0 0 36 16"><g shape-rendering="crispEdges"><rect x="10" y="8" width="5" height="1" fill="#ccccff"/><path d="M4 3h4v1h1v1h1v4h-1v1h-1v1h-4v-1h-1v-1h-1v-4h1v-1h1z" fill="#000"/><path d="M4 4h4v1h1v4h-1v1h-4v-1h-1v-4h1z" fill="#a8a8e4"/><path d="M5 5h3v4h-1v1h-2v-1h-1v-3h1z" fill="#ccccff"/><path d="M7 7h1v2h-1v1h-1v-1h1z" fill="#fff"/><rect x="5" y="6" width="2" height="2" fill="#000"/><rect x="10" y="6" width="4" height="2" fill="#000"/><rect x="19" y="13" width="1" height="1" fill="#000"/><rect x="20" y="14" width="1" height="1" fill="#000"/><rect x="20" y="12" width="1" height="1" fill="#000"/><rect x="21" y="13" width="1" height="1" fill="#000"/><rect x="21" y="11" width="1" height="1" fill="#000"/><rect x="22" y="12" width="1" height="1" fill="#000"/><rect x="22" y="10" width="1" height="1" fill="#000"/><rect x="23" y="11" width="1" height="1" fill="#000"/><rect x="23" y="9" width="1" height="1" fill="#000"/><rect x="24" y="10" width="1" height="1" fill="#000"/><rect x="24" y="8" width="1" height="1" fill="#000"/><rect x="25" y="9" width="1" height="1" fill="#000"/><rect x="25" y="7" width="1" height="1" fill="#000"/><rect x="26" y="8" width="1" height="1" fill="#000"/><rect x="26" y="6" width="1" height="1" fill="#000"/><rect x="27" y="7" width="1" height="1" fill="#000"/><rect x="27" y="5" width="1" height="1" fill="#000"/><rect x="28" y="6" width="1" height="1" fill="#000"/><rect x="19" y="14" width="1" height="1" fill="#000"/><rect x="20" y="13" width="1" height="1" fill="#d8c800"/><rect x="22" y="11" width="1" height="1" fill="#d8c800"/><rect x="24" y="9" width="1" height="1" fill="#d8c800"/><rect x="26" y="7" width="1" height="1" fill="#d8c800"/><rect x="28" y="5" width="1" height="1" fill="#d8c800"/><rect x="21" y="12" width="1" height="1" fill="#909090"/><rect x="23" y="10" width="1" height="1" fill="#909090"/><rect x="25" y="8" width="1" height="1" fill="#909090"/><rect x="27" y="6" width="1" height="1" fill="#909090"/><path d="M29 2h2v1h1v2h-1v1h-2v-1h-1v-2h1z" fill="#000"/><rect x="29" y="3" width="2" height="2" fill="#a0a0a0"/><rect x="24" y="1" width="1" height="1" fill="#ffff00"/><rect x="25" y="1" width="4" height="1" fill="#999900"/><rect x="27" y="2" width="1" height="1" fill="#808000"/><rect x="31" y="5" width="3" height="1" fill="#999900"/><rect x="31" y="6" width="3" height="1" fill="#999900"/><rect x="32" y="6" width="1" height="1" fill="#ffff00"/><rect x="31" y="7" width="2" height="1" fill="#999900"/></g></svg>
<div class="abs mono" style="left:56px;top:225px">QMAN$JBC_ALIVE_01</div>
<div class="abs mono" style="left:364px;top:225px">AFFS23</div>
<div class="abs mono" style="left:462px;top:225px">QMAN$MSR_AFFS23$DKD300..ø.....</div>
<div class="abs mono" style="left:770px;top:225px">0 01:24:29</div>
<div class="abs mono" style="left:879.4px;top:224px;letter-spacing:-3.111px;transform:scaleX(1.8);transform-origin:0 0">-------</div>
<div class="abs mono" style="left:959px;top:225px">VALID</div>
<svg class="abs" style="left:18px;top:240px" width="36" height="16" viewBox="0 0 36 16"><g shape-rendering="crispEdges"><rect x="10" y="8" width="5" height="1" fill="#ccccff"/><path d="M4 3h4v1h1v1h1v4h-1v1h-1v1h-4v-1h-1v-1h-1v-4h1v-1h1z" fill="#000"/><path d="M4 4h4v1h1v4h-1v1h-4v-1h-1v-4h1z" fill="#a8a8e4"/><path d="M5 5h3v4h-1v1h-2v-1h-1v-3h1z" fill="#ccccff"/><path d="M7 7h1v2h-1v1h-1v-1h1z" fill="#fff"/><rect x="5" y="6" width="2" height="2" fill="#000"/><rect x="10" y="6" width="4" height="2" fill="#000"/><rect x="19" y="13" width="1" height="1" fill="#000"/><rect x="20" y="14" width="1" height="1" fill="#000"/><rect x="20" y="12" width="1" height="1" fill="#000"/><rect x="21" y="13" width="1" height="1" fill="#000"/><rect x="21" y="11" width="1" height="1" fill="#000"/><rect x="22" y="12" width="1" height="1" fill="#000"/><rect x="22" y="10" width="1" height="1" fill="#000"/><rect x="23" y="11" width="1" height="1" fill="#000"/><rect x="23" y="9" width="1" height="1" fill="#000"/><rect x="24" y="10" width="1" height="1" fill="#000"/><rect x="24" y="8" width="1" height="1" fill="#000"/><rect x="25" y="9" width="1" height="1" fill="#000"/><rect x="25" y="7" width="1" height="1" fill="#000"/><rect x="26" y="8" width="1" height="1" fill="#000"/><rect x="26" y="6" width="1" height="1" fill="#000"/><rect x="27" y="7" width="1" height="1" fill="#000"/><rect x="27" y="5" width="1" height="1" fill="#000"/><rect x="28" y="6" width="1" height="1" fill="#000"/><rect x="19" y="14" width="1" height="1" fill="#000"/><rect x="20" y="13" width="1" height="1" fill="#d8c800"/><rect x="22" y="11" width="1" height="1" fill="#d8c800"/><rect x="24" y="9" width="1" height="1" fill="#d8c800"/><rect x="26" y="7" width="1" height="1" fill="#d8c800"/><rect x="28" y="5" width="1" height="1" fill="#d8c800"/><rect x="21" y="12" width="1" height="1" fill="#909090"/><rect x="23" y="10" width="1" height="1" fill="#909090"/><rect x="25" y="8" width="1" height="1" fill="#909090"/><rect x="27" y="6" width="1" height="1" fill="#909090"/><path d="M29 2h2v1h1v2h-1v1h-2v-1h-1v-2h1z" fill="#000"/><rect x="29" y="3" width="2" height="2" fill="#a0a0a0"/><rect x="24" y="1" width="1" height="1" fill="#ffff00"/><rect x="25" y="1" width="4" height="1" fill="#999900"/><rect x="27" y="2" width="1" height="1" fill="#808000"/><rect x="31" y="5" width="3" height="1" fill="#999900"/><rect x="31" y="6" width="3" height="1" fill="#999900"/><rect x="32" y="6" width="1" height="1" fill="#ffff00"/><rect x="31" y="7" width="2" height="1" fill="#999900"/></g></svg>
<div class="abs mono" style="left:56px;top:241px">QMAN$JBC_ALIVE_01</div>
<div class="abs mono" style="left:364px;top:241px">AFFS12</div>
<div class="abs mono" style="left:462px;top:241px">QMAN$MSR_AFFS12$DKA200..2.....</div>
<div class="abs mono" style="left:770px;top:241px">0 01:24:23</div>
<div class="abs mono" style="left:879.4px;top:240px;letter-spacing:-3.111px;transform:scaleX(1.8);transform-origin:0 0">-------</div>
<div class="abs mono" style="left:959px;top:241px">VALID</div>
<svg class="abs" style="left:18px;top:256px" width="36" height="16" viewBox="0 0 36 16"><g shape-rendering="crispEdges"><rect x="10" y="8" width="5" height="1" fill="#ccccff"/><path d="M4 3h4v1h1v1h1v4h-1v1h-1v1h-4v-1h-1v-1h-1v-4h1v-1h1z" fill="#000"/><path d="M4 4h4v1h1v4h-1v1h-4v-1h-1v-4h1z" fill="#a8a8e4"/><path d="M5 5h3v4h-1v1h-2v-1h-1v-3h1z" fill="#ccccff"/><path d="M7 7h1v2h-1v1h-1v-1h1z" fill="#fff"/><rect x="5" y="6" width="2" height="2" fill="#000"/><rect x="10" y="6" width="4" height="2" fill="#000"/><rect x="19" y="13" width="1" height="1" fill="#000"/><rect x="20" y="14" width="1" height="1" fill="#000"/><rect x="20" y="12" width="1" height="1" fill="#000"/><rect x="21" y="13" width="1" height="1" fill="#000"/><rect x="21" y="11" width="1" height="1" fill="#000"/><rect x="22" y="12" width="1" height="1" fill="#000"/><rect x="22" y="10" width="1" height="1" fill="#000"/><rect x="23" y="11" width="1" height="1" fill="#000"/><rect x="23" y="9" width="1" height="1" fill="#000"/><rect x="24" y="10" width="1" height="1" fill="#000"/><rect x="24" y="8" width="1" height="1" fill="#000"/><rect x="25" y="9" width="1" height="1" fill="#000"/><rect x="25" y="7" width="1" height="1" fill="#000"/><rect x="26" y="8" width="1" height="1" fill="#000"/><rect x="26" y="6" width="1" height="1" fill="#000"/><rect x="27" y="7" width="1" height="1" fill="#000"/><rect x="27" y="5" width="1" height="1" fill="#000"/><rect x="28" y="6" width="1" height="1" fill="#000"/><rect x="19" y="14" width="1" height="1" fill="#000"/><rect x="20" y="13" width="1" height="1" fill="#d8c800"/><rect x="22" y="11" width="1" height="1" fill="#d8c800"/><rect x="24" y="9" width="1" height="1" fill="#d8c800"/><rect x="26" y="7" width="1" height="1" fill="#d8c800"/><rect x="28" y="5" width="1" height="1" fill="#d8c800"/><rect x="21" y="12" width="1" height="1" fill="#909090"/><rect x="23" y="10" width="1" height="1" fill="#909090"/><rect x="25" y="8" width="1" height="1" fill="#909090"/><rect x="27" y="6" width="1" height="1" fill="#909090"/><path d="M29 2h2v1h1v2h-1v1h-2v-1h-1v-2h1z" fill="#000"/><rect x="29" y="3" width="2" height="2" fill="#a0a0a0"/><rect x="24" y="1" width="1" height="1" fill="#ffff00"/><rect x="25" y="1" width="4" height="1" fill="#999900"/><rect x="27" y="2" width="1" height="1" fill="#808000"/><rect x="31" y="5" width="3" height="1" fill="#999900"/><rect x="31" y="6" width="3" height="1" fill="#999900"/><rect x="32" y="6" width="1" height="1" fill="#ffff00"/><rect x="31" y="7" width="2" height="1" fill="#999900"/></g></svg>
<div class="abs mono" style="left:56px;top:257px">QMAN$JBC_ALIVE_01</div>
<div class="abs mono" style="left:364px;top:257px">AFFS8</div>
<div class="abs mono" style="left:462px;top:257px">QMAN$MSR_$8$DKA0..............</div>
<div class="abs mono" style="left:770px;top:257px">0 01:24:24</div>
<div class="abs mono" style="left:879.4px;top:256px;letter-spacing:-3.111px;transform:scaleX(1.8);transform-origin:0 0">-------</div>
<div class="abs mono" style="left:959px;top:257px">VALID</div>
<svg class="abs" style="left:18px;top:272px" width="36" height="16" viewBox="0 0 36 16"><g shape-rendering="crispEdges"><rect x="10" y="8" width="5" height="1" fill="#ccccff"/><path d="M4 3h4v1h1v1h1v4h-1v1h-1v1h-4v-1h-1v-1h-1v-4h1v-1h1z" fill="#000"/><path d="M4 4h4v1h1v4h-1v1h-4v-1h-1v-4h1z" fill="#a8a8e4"/><path d="M5 5h3v4h-1v1h-2v-1h-1v-3h1z" fill="#ccccff"/><path d="M7 7h1v2h-1v1h-1v-1h1z" fill="#fff"/><rect x="5" y="6" width="2" height="2" fill="#000"/><rect x="10" y="6" width="4" height="2" fill="#000"/><rect x="19" y="13" width="1" height="1" fill="#000"/><rect x="20" y="14" width="1" height="1" fill="#000"/><rect x="20" y="12" width="1" height="1" fill="#000"/><rect x="21" y="13" width="1" height="1" fill="#000"/><rect x="21" y="11" width="1" height="1" fill="#000"/><rect x="22" y="12" width="1" height="1" fill="#000"/><rect x="22" y="10" width="1" height="1" fill="#000"/><rect x="23" y="11" width="1" height="1" fill="#000"/><rect x="23" y="9" width="1" height="1" fill="#000"/><rect x="24" y="10" width="1" height="1" fill="#000"/><rect x="24" y="8" width="1" height="1" fill="#000"/><rect x="25" y="9" width="1" height="1" fill="#000"/><rect x="25" y="7" width="1" height="1" fill="#000"/><rect x="26" y="8" width="1" height="1" fill="#000"/><rect x="26" y="6" width="1" height="1" fill="#000"/><rect x="27" y="7" width="1" height="1" fill="#000"/><rect x="27" y="5" width="1" height="1" fill="#000"/><rect x="28" y="6" width="1" height="1" fill="#000"/><rect x="19" y="14" width="1" height="1" fill="#000"/><rect x="20" y="13" width="1" height="1" fill="#d8c800"/><rect x="22" y="11" width="1" height="1" fill="#d8c800"/><rect x="24" y="9" width="1" height="1" fill="#d8c800"/><rect x="26" y="7" width="1" height="1" fill="#d8c800"/><rect x="28" y="5" width="1" height="1" fill="#d8c800"/><rect x="21" y="12" width="1" height="1" fill="#909090"/><rect x="23" y="10" width="1" height="1" fill="#909090"/><rect x="25" y="8" width="1" height="1" fill="#909090"/><rect x="27" y="6" width="1" height="1" fill="#909090"/><path d="M29 2h2v1h1v2h-1v1h-2v-1h-1v-2h1z" fill="#000"/><rect x="29" y="3" width="2" height="2" fill="#a0a0a0"/><rect x="24" y="1" width="1" height="1" fill="#ffff00"/><rect x="25" y="1" width="4" height="1" fill="#999900"/><rect x="27" y="2" width="1" height="1" fill="#808000"/><rect x="31" y="5" width="3" height="1" fill="#999900"/><rect x="31" y="6" width="3" height="1" fill="#999900"/><rect x="32" y="6" width="1" height="1" fill="#ffff00"/><rect x="31" y="7" width="2" height="1" fill="#999900"/></g></svg>
<div class="abs mono" style="left:56px;top:273px">REG$MASTER_LOCK</div>
<div class="abs mono" style="left:364px;top:273px">AFFS12</div>
<div class="abs mono" style="left:770px;top:273px">0 01:24:24</div>
<div class="abs mono" style="left:879.4px;top:272px;letter-spacing:-3.111px;transform:scaleX(1.8);transform-origin:0 0">-------</div>
<div class="abs mono" style="left:959px;top:273px">DIRENTRY VALID</div>
<svg class="abs" style="left:18px;top:288px" width="36" height="16" viewBox="0 0 36 16"><g shape-rendering="crispEdges"><rect x="10" y="8" width="5" height="1" fill="#ccccff"/><path d="M4 3h4v1h1v1h1v4h-1v1h-1v1h-4v-1h-1v-1h-1v-4h1v-1h1z" fill="#000"/><path d="M4 4h4v1h1v4h-1v1h-4v-1h-1v-4h1z" fill="#a8a8e4"/><path d="M5 5h3v4h-1v1h-2v-1h-1v-3h1z" fill="#ccccff"/><path d="M7 7h1v2h-1v1h-1v-1h1z" fill="#fff"/><rect x="5" y="6" width="2" height="2" fill="#000"/><rect x="10" y="6" width="4" height="2" fill="#000"/><rect x="19" y="13" width="1" height="1" fill="#000"/><rect x="20" y="14" width="1" height="1" fill="#000"/><rect x="20" y="12" width="1" height="1" fill="#000"/><rect x="21" y="13" width="1" height="1" fill="#000"/><rect x="21" y="11" width="1" height="1" fill="#000"/><rect x="22" y="12" width="1" height="1" fill="#000"/><rect x="22" y="10" width="1" height="1" fill="#000"/><rect x="23" y="11" width="1" height="1" fill="#000"/><rect x="23" y="9" width="1" height="1" fill="#000"/><rect x="24" y="10" width="1" height="1" fill="#000"/><rect x="24" y="8" width="1" height="1" fill="#000"/><rect x="25" y="9" width="1" height="1" fill="#000"/><rect x="25" y="7" width="1" height="1" fill="#000"/><rect x="26" y="8" width="1" height="1" fill="#000"/><rect x="26" y="6" width="1" height="1" fill="#000"/><rect x="27" y="7" width="1" height="1" fill="#000"/><rect x="27" y="5" width="1" height="1" fill="#000"/><rect x="28" y="6" width="1" height="1" fill="#000"/><rect x="19" y="14" width="1" height="1" fill="#000"/><rect x="20" y="13" width="1" height="1" fill="#d8c800"/><rect x="22" y="11" width="1" height="1" fill="#d8c800"/><rect x="24" y="9" width="1" height="1" fill="#d8c800"/><rect x="26" y="7" width="1" height="1" fill="#d8c800"/><rect x="28" y="5" width="1" height="1" fill="#d8c800"/><rect x="21" y="12" width="1" height="1" fill="#909090"/><rect x="23" y="10" width="1" height="1" fill="#909090"/><rect x="25" y="8" width="1" height="1" fill="#909090"/><rect x="27" y="6" width="1" height="1" fill="#909090"/><path d="M29 2h2v1h1v2h-1v1h-2v-1h-1v-2h1z" fill="#000"/><rect x="29" y="3" width="2" height="2" fill="#a0a0a0"/><rect x="24" y="1" width="1" height="1" fill="#ffff00"/><rect x="25" y="1" width="4" height="1" fill="#999900"/><rect x="27" y="2" width="1" height="1" fill="#808000"/><rect x="31" y="5" width="3" height="1" fill="#999900"/><rect x="31" y="6" width="3" height="1" fill="#999900"/><rect x="32" y="6" width="1" height="1" fill="#ffff00"/><rect x="31" y="7" width="2" height="1" fill="#999900"/></g></svg>
<div class="abs mono" style="left:56px;top:289px">REG$MASTER_LOCK</div>
<div class="abs mono" style="left:364px;top:289px">AFFS8</div>
<div class="abs mono" style="left:770px;top:289px">0 01:24:24</div>
<div class="abs mono" style="left:879.4px;top:288px;letter-spacing:-3.111px;transform:scaleX(1.8);transform-origin:0 0">-------</div>
<div class="abs mono" style="left:959px;top:289px">DIRENTRY VALID</div>
<svg class="abs" style="left:18px;top:304px" width="36" height="16" viewBox="0 0 36 16"><g shape-rendering="crispEdges"><rect x="10" y="8" width="5" height="1" fill="#ccccff"/><path d="M4 3h4v1h1v1h1v4h-1v1h-1v1h-4v-1h-1v-1h-1v-4h1v-1h1z" fill="#000"/><path d="M4 4h4v1h1v4h-1v1h-4v-1h-1v-4h1z" fill="#a8a8e4"/><path d="M5 5h3v4h-1v1h-2v-1h-1v-3h1z" fill="#ccccff"/><path d="M7 7h1v2h-1v1h-1v-1h1z" fill="#fff"/><rect x="5" y="6" width="2" height="2" fill="#000"/><rect x="10" y="6" width="4" height="2" fill="#000"/><rect x="19" y="13" width="1" height="1" fill="#000"/><rect x="20" y="14" width="1" height="1" fill="#000"/><rect x="20" y="12" width="1" height="1" fill="#000"/><rect x="21" y="13" width="1" height="1" fill="#000"/><rect x="21" y="11" width="1" height="1" fill="#000"/><rect x="22" y="12" width="1" height="1" fill="#000"/><rect x="22" y="10" width="1" height="1" fill="#000"/><rect x="23" y="11" width="1" height="1" fill="#000"/><rect x="23" y="9" width="1" height="1" fill="#000"/><rect x="24" y="10" width="1" height="1" fill="#000"/><rect x="24" y="8" width="1" height="1" fill="#000"/><rect x="25" y="9" width="1" height="1" fill="#000"/><rect x="25" y="7" width="1" height="1" fill="#000"/><rect x="26" y="8" width="1" height="1" fill="#000"/><rect x="26" y="6" width="1" height="1" fill="#000"/><rect x="27" y="7" width="1" height="1" fill="#000"/><rect x="27" y="5" width="1" height="1" fill="#000"/><rect x="28" y="6" width="1" height="1" fill="#000"/><rect x="19" y="14" width="1" height="1" fill="#000"/><rect x="20" y="13" width="1" height="1" fill="#d8c800"/><rect x="22" y="11" width="1" height="1" fill="#d8c800"/><rect x="24" y="9" width="1" height="1" fill="#d8c800"/><rect x="26" y="7" width="1" height="1" fill="#d8c800"/><rect x="28" y="5" width="1" height="1" fill="#d8c800"/><rect x="21" y="12" width="1" height="1" fill="#909090"/><rect x="23" y="10" width="1" height="1" fill="#909090"/><rect x="25" y="8" width="1" height="1" fill="#909090"/><rect x="27" y="6" width="1" height="1" fill="#909090"/><path d="M29 2h2v1h1v2h-1v1h-2v-1h-1v-2h1z" fill="#000"/><rect x="29" y="3" width="2" height="2" fill="#a0a0a0"/><rect x="24" y="1" width="1" height="1" fill="#ffff00"/><rect x="25" y="1" width="4" height="1" fill="#999900"/><rect x="27" y="2" width="1" height="1" fill="#808000"/><rect x="31" y="5" width="3" height="1" fill="#999900"/><rect x="31" y="6" width="3" height="1" fill="#999900"/><rect x="32" y="6" width="1" height="1" fill="#ffff00"/><rect x="31" y="7" width="2" height="1" fill="#999900"/></g></svg>
<div class="abs mono" style="left:56px;top:305px">REG$MASTER_LOCK</div>
<div class="abs mono" style="left:364px;top:305px">AFFS7</div>
<div class="abs mono" style="left:770px;top:305px">0 01:24:24</div>
<div class="abs mono" style="left:879.4px;top:304px;letter-spacing:-3.111px;transform:scaleX(1.8);transform-origin:0 0">-------</div>
<div class="abs mono" style="left:959px;top:305px">DIRENTRY VALID</div>
</div>
<svg class="abs" style="left:18px;top:80px" width="12" height="16" viewBox="0 0 12 16" shape-rendering="crispEdges">
<rect x="0" y="7" width="12" height="9" fill="#000"/>
<rect x="1" y="8" width="10" height="7" fill="#fff"/>
<rect x="2" y="9" width="8" height="5" fill="#d0d0d0"/>
<rect x="4" y="9" width="4" height="1" fill="#000"/>
<rect x="5" y="10" width="2" height="4" fill="#000"/>
<rect x="2" y="0" width="8" height="1" fill="#000"/>
<rect x="1" y="1" width="10" height="1" fill="#000"/>
<rect x="2" y="1" width="8" height="1" fill="#e4e4e4"/>
<rect x="0" y="2" width="12" height="1" fill="#000"/>
<rect x="1" y="2" width="1" height="1" fill="#e4e4e4"/><rect x="10" y="2" width="1" height="1" fill="#e4e4e4"/>
<rect x="0" y="3" width="3" height="4" fill="#000"/><rect x="1" y="3" width="1" height="4" fill="#f4f4f4"/>
<rect x="9" y="3" width="3" height="3" fill="#000"/><rect x="10" y="3" width="1" height="2" fill="#f4f4f4"/>
</svg>
<svg class="abs" style="left:16px;top:529px" width="986" height="17" viewBox="0 0 986 17" shape-rendering="crispEdges">
<pattern id="dots" x="19" y="3" width="4" height="4" patternUnits="userSpaceOnUse">
<rect x="0" y="0" width="4" height="4" fill="#9999cc"/>
<rect x="0" y="0" width="1" height="1" fill="#ccccff"/>
<rect x="2" y="2" width="1" height="1" fill="#ccccff"/>
<rect x="1" y="1" width="1" height="1" fill="#666699"/>
<rect x="3" y="3" width="1" height="1" fill="#666699"/>
</pattern>
<rect x="0" y="0" width="984" height="15" fill="#ccc"/>
<rect x="0" y="0" width="984" height="1" fill="#666"/>
<rect x="0" y="15" width="985" height="1" fill="#666"/>
<rect x="-1" y="16" width="987" height="1" fill="#fff"/>
<!-- left button -->
<rect x="0" y="1" width="15" height="1" fill="#fff"/>
<rect x="0" y="1" width="1" height="14" fill="#fff"/>
<rect x="8" y="4" width="1" height="8" fill="#000"/><rect x="7" y="5" width="1" height="6" fill="#000"/><rect x="6" y="6" width="1" height="4" fill="#000"/><rect x="5" y="7" width="1" height="2" fill="#000"/>
<!-- thumb -->
<rect x="15" y="0" width="895" height="15" fill="#666699"/>
<rect x="16" y="1" width="893" height="14" fill="#9999cc"/>
<rect x="16" y="1" width="893" height="1" fill="#ccccff"/>
<rect x="16" y="1" width="1" height="14" fill="#ccccff"/>
<rect x="19" y="3" width="888" height="10" fill="url(#dots)"/>
<!-- track -->
<rect x="910" y="1" width="58" height="1" fill="#999"/>
<rect x="910" y="1" width="1" height="14" fill="#999"/>
<!-- right button -->
<rect x="968" y="0" width="1" height="16" fill="#666"/>
<rect x="969" y="1" width="14" height="1" fill="#fff"/>
<rect x="969" y="1" width="1" height="14" fill="#fff"/>
<rect x="983" y="0" width="1" height="16" fill="#666"/>
<rect x="975" y="4" width="1" height="8" fill="#000"/><rect x="976" y="5" width="1" height="6" fill="#000"/><rect x="977" y="6" width="1" height="4" fill="#000"/><rect x="978" y="7" width="1" height="2" fill="#000"/>
</svg>
<div id="tip" class="abs"></div>
<div id="tiptitle" class="abs">REG$MASTER_LOCK</div>
<div class="abs tl" style="top:362px">RSB</div><div class="abs tv" style="top:362px;letter-spacing:-0.18px">FFFFFFFF7FEC9A50</div>
<div class="abs tl" style="top:379px">Node</div><div class="abs tv" style="top:379px;letter-spacing:-0.4px">AFFS7</div>
<div class="abs tl" style="top:396px">Parent</div>
<div class="abs tl" style="top:413px">Duration</div><div class="abs tv" style="top:413px;letter-spacing:0.1px">0 01:24:24</div>
<div class="abs tl" style="top:430px">Status</div><div class="abs tv" style="top:430px;letter-spacing:-0.1px">DIRENTRY VALID</div>
<div class="abs tl" style="top:447px">ValBlk</div><div class="abs tv" style="top:447px;letter-spacing:0.25px">0000:</div><div class="abs tv" style="top:447px;left:379.3px;letter-spacing:0.25px">53464641</div><div class="abs tv" style="top:447px;left:438.4px;letter-spacing:0.3px">00000117</div><div class="abs tv" style="top:447px;left:499.5px;letter-spacing:-0.45px">....AFFS</div>
<div class="abs tl" style="top:464px">  dump</div><div class="abs tv" style="top:464px;letter-spacing:0.25px">0008:</div><div class="abs tv" style="top:464px;left:379.3px;letter-spacing:0.25px">00000001</div><div class="abs tv" style="top:464px;left:438.4px;letter-spacing:0.3px">00000037</div><div class="abs tv" style="top:464px;left:500.3px;letter-spacing:-0.4px">7.......</div>
<div id="status" class="abs">OpenVMS Alpha node AFFS11 - Lock Contention</div>
</body>
</html>
